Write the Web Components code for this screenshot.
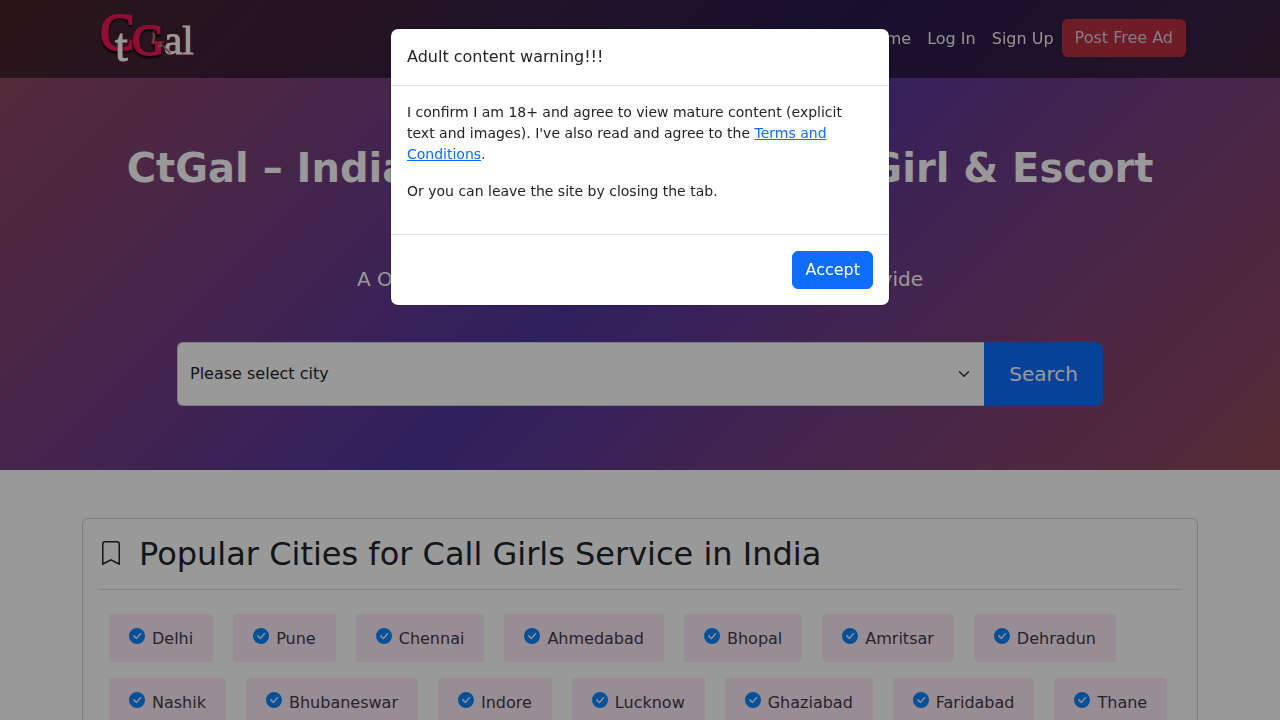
<!DOCTYPE html>
<html lang="en">
<head>
<meta charset="utf-8">
<meta name="viewport" content="width=device-width, initial-scale=1">
<title>CtGal</title>
<style>
  body {
    margin: 0;
    font-family: "DejaVu Sans", sans-serif;
    font-size: 16px;
    line-height: 24px;
    color: #212529;
    background: #fff;
  }
</style>
</head>
<body>
<ct-hero>
  <ct-nav slot="nav"></ct-nav>
  <span slot="title">CtGal – India's Most Popular Call Girl &amp; Escort Directory</span>
  <span slot="lead">A Online Classified directory with all services we provide</span>
  <city-search></city-search>
</ct-hero>
<city-card>
  <span slot="title">Popular Cities for Call Girls Service in India</span>
</city-card>
<consent-modal>
  <span slot="title">Adult content warning!!!</span>
  <span slot="action">Accept</span>
</consent-modal>

<script>
const define = (name, html, setup) => {
  const template = document.createElement('template');
  template.innerHTML = html;

  customElements.define(name, class extends HTMLElement {
    constructor() {
      super();
      this._shadowRoot = this.attachShadow({ mode: 'open' });
      this._shadowRoot.appendChild(template.content.cloneNode(true));
      if (setup) {
        setup(this, this._shadowRoot);
      }
    }
  });
};

define('ct-logo', `
  <style>
    :host {
      display: block;
    }

    svg {
      display: block;
      overflow: visible;
    }

    text {
      font-family: "Liberation Serif", serif;
    }

    .red {
      fill: #f01858;
      stroke: #f01858;
      stroke-width: 2;
      filter: drop-shadow(0 2px 1px #000);
    }

    .white {
      fill: #fff;
      stroke: #fff;
      stroke-width: 1;
      filter: drop-shadow(1px 1px 1px #80102f);
    }
  </style>
  <svg width="100" height="54" viewBox="0 0 100 54" role="img" aria-label="CtGal">
    <text class="red" x="6" y="38" font-size="52">C</text>
    <text class="red" x="38" y="43" font-size="45">G</text>
    <text class="white" x="21" y="49" font-size="46">t</text>
    <text class="white" x="70" y="42" font-size="41">al</text>
    <path d="M61 18c-3 2-1 5-1 7l-1 6M66 30c1 3 4 3 5 6l5 5M68 34l-4 0" fill="none" stroke="#b08070" stroke-width="2"/>
    <path d="M60 18v3M68 31l3 3" fill="none" stroke="#4a2a20" stroke-width="2"/>
  </svg>
`);

define('ct-nav', `
  <style>
    :host {
      display: block;
      background: rgba(0, 0, 0, .5);
    }

    nav {
      box-sizing: border-box;
      max-width: 1140px;
      margin: 0 auto;
      padding: 12px 24px;
      display: flex;
      align-items: center;
      justify-content: space-between;
    }

    .links {
      display: flex;
      align-items: flex-start;
    }

    a {
      color: #fff;
      text-decoration: none;
      padding: 8px;
      opacity: .95;
    }

    .post {
      background: #dc3545;
      padding: 7px 13px;
      border-radius: 6px;
      opacity: .8;
    }
  </style>
  <nav>
    <ct-logo></ct-logo>
    <div class="links">
      <a href="#home">Home</a>
      <a href="#login">Log In</a>
      <a href="#signup">Sign Up</a>
      <a class="post" href="#post">Post Free Ad</a>
    </div>
  </nav>
`);

define('ct-hero', `
  <style>
    :host {
      display: block;
      color: #fff;
      background: linear-gradient(135deg, #914858, #7a4079 23%, #5c3898 44%, #4b389b 50%, #5c3898 56%, #7a4079 77%, #914858);
    }

    .content {
      padding: 66px 16px 64px;
      max-width: 1116px;
      margin: 0 auto;
      text-align: center;
    }

    h1 {
      margin: 0 0 24px;
      font-size: 40px;
      line-height: 48px;
      font-weight: 700;
    }

    p {
      margin: 0 0 48px;
      font-size: 20px;
      line-height: 30px;
    }
  </style>
  <slot name="nav"></slot>
  <div class="content">
    <h1><slot name="title"></slot></h1>
    <p><slot name="lead"></slot></p>
    <slot></slot>
  </div>
`);

define('city-search', `
  <style>
    :host {
      display: block;
      max-width: 926px;
      margin: 0 auto;
    }

    form {
      display: flex;
    }

    .field {
      flex: 1;
      display: grid;
      align-items: center;
      min-width: 0;
    }

    .field > * {
      grid-area: 1 / 1;
    }

    select {
      min-width: 0;
      height: 64px;
      padding: 0 36px 0 12px;
      font: inherit;
      color: #212529;
      border: 1px solid #ced4da;
      border-right: 0;
      border-radius: 6px 0 0 6px;
      appearance: none;
      background: #fff;
    }

    svg {
      justify-self: end;
      margin-right: 14px;
      pointer-events: none;
    }

    button {
      padding: 0 25px;
      font: inherit;
      font-size: 20px;
      color: #fff;
      background: #0d6efd;
      border: 0;
      border-radius: 0 8px 8px 0;
    }
  </style>
  <form>
    <div class="field">
      <select aria-label="City">
        <option>Please select city</option>
      </select>
      <svg width="12" height="12" viewBox="0 0 16 16"><path fill="none" stroke="#343a40" stroke-linecap="round" stroke-linejoin="round" stroke-width="2" d="m2 5 6 6 6-6"/></svg>
    </div>
    <button type="submit">Search</button>
  </form>
`);

define('city-chip', `
  <style>
    :host {
      display: block;
    }

    a {
      display: flex;
      align-items: center;
      gap: 7px;
      padding: 13px 20px 11px;
      color: #3d3b4a;
      text-decoration: none;
      background: #ffecf8;
      border-radius: 3px;
    }

    svg {
      margin-bottom: 6px;
    }
  </style>
  <a href="#city">
    <svg width="16" height="16" viewBox="0 0 16 16" fill="#0088ff">
      <path d="M16 8A8 8 0 1 1 0 8a8 8 0 0 1 16 0zm-3.97-3.03a.75.75 0 0 0-1.08.022L7.477 9.417 5.384 7.323a.75.75 0 0 0-1.06 1.06L6.97 11.03a.75.75 0 0 0 1.079-.02l3.992-4.99a.75.75 0 0 0-.01-1.05z"/>
    </svg>
    <slot></slot>
  </a>
`);

const cities = [
  'Delhi', 'Pune', 'Chennai', 'Ahmedabad', 'Bhopal', 'Amritsar', 'Dehradun',
  'Nashik', 'Bhubaneswar', 'Indore', 'Lucknow', 'Ghaziabad', 'Faridabad', 'Thane',
];

define('city-card', `
  <style>
    :host {
      display: block;
      max-width: 1116px;
      margin: 48px auto;
    }

    section {
      padding: 16px;
      border: 1px solid #d0d0d0;
      border-radius: 6px;
    }

    header {
      display: flex;
      align-items: center;
      gap: 16px;
      padding-bottom: 16px;
      border-bottom: 1px solid #dedede;
    }

    header svg {
      margin-bottom: 2px;
    }

    h2 {
      margin: 0;
      font-size: 32px;
      line-height: 38px;
      font-weight: 400;
    }

    .cities {
      display: flex;
      flex-wrap: wrap;
      gap: 16px 20px;
      padding: 24px 10px;
    }
  </style>
  <section>
    <header>
      <svg width="24" height="24" viewBox="0 0 16 16" fill="currentColor">
        <path d="M2 2a2 2 0 0 1 2-2h8a2 2 0 0 1 2 2v13.5a.5.5 0 0 1-.777.416L8 13.101l-5.223 2.815A.5.5 0 0 1 2 15.5V2zm2-1a1 1 0 0 0-1 1v12.566l4.723-2.482a.5.5 0 0 1 .554 0L13 14.566V2a1 1 0 0 0-1-1H4z"/>
      </svg>
      <h2><slot name="title"></slot></h2>
    </header>
    <div class="cities"></div>
  </section>
`, (host, root) => {
  const list = root.querySelector('.cities');
  cities.forEach((city) => {
    const chip = document.createElement('city-chip');
    chip.textContent = city;
    list.appendChild(chip);
  });
});

define('consent-modal', `
  <style>
    :host {
      position: fixed;
      inset: 0;
      z-index: 10;
      padding: 28px 16px;
      background: rgba(0, 0, 0, .4);
    }

    .dialog {
      box-sizing: border-box;
      max-width: 500px;
      margin: 0 auto;
      background: #fff;
      background-clip: padding-box;
      border: 1px solid rgba(0, 0, 0, .175);
      border-radius: 8px;
    }

    h5 {
      margin: 0;
      padding: 16px;
      font-size: 16px;
      line-height: 24px;
      font-weight: 400;
      border-bottom: 1px solid #dee2e6;
    }

    .body {
      padding: 16px;
      font-size: 14px;
      line-height: 21px;
    }

    p {
      margin: 0 0 16px;
    }

    a {
      color: #0d6efd;
    }

    footer {
      display: flex;
      justify-content: flex-end;
      padding: 16px;
      border-top: 1px solid #dee2e6;
    }

    button {
      padding: 6px 12px;
      font: inherit;
      color: #fff;
      background: #0d6efd;
      border: 1px solid #0d6efd;
      border-radius: 6px;
    }
  </style>
  <div class="dialog" role="dialog" aria-modal="true" aria-labelledby="title">
    <h5 id="title"><slot name="title"></slot></h5>
    <div class="body">
      <p>I confirm I am 18+ and agree to view mature content (explicit text and images). I've also read and agree to the <a href="#terms">Terms and Conditions</a>.</p>
      <p>Or you can leave the site by closing the tab.</p>
    </div>
    <footer><button type="button"><slot name="action"></slot></button></footer>
  </div>
`, (host, root) => {
  root.querySelector('button').addEventListener('click', () => host.remove());
});
</script>
</body>
</html>
